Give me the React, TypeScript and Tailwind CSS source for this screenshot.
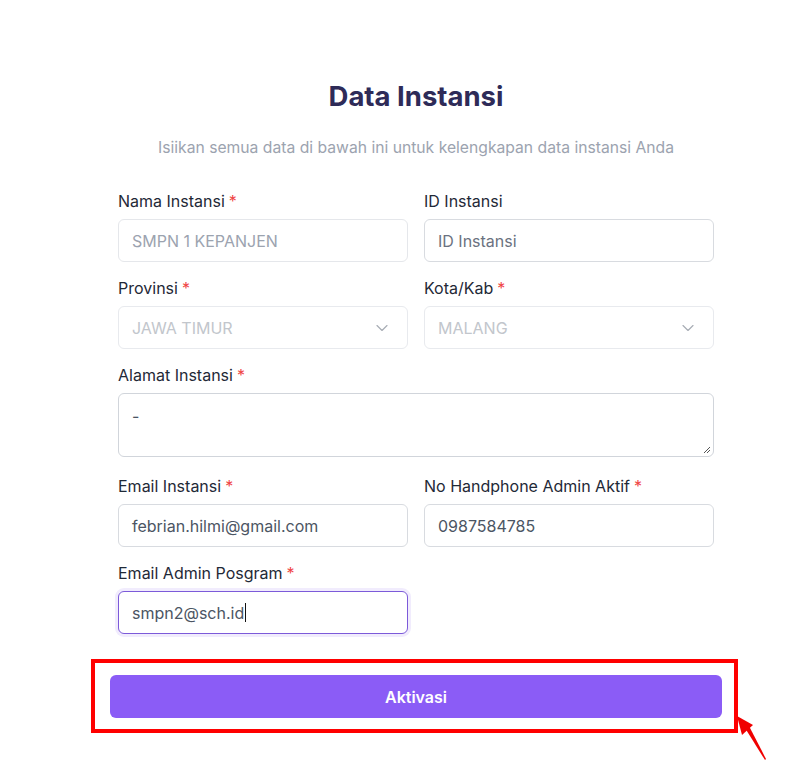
import { ChevronDown } from 'lucide-react';

type FieldProps = {
  label: string;
  required?: boolean;
  children: React.ReactNode;
};

function Field({ label, required, children }: FieldProps) {
  return (
    <div className="flex flex-col">
      <label className="mb-2 h-5 text-[16px] leading-5 text-[#1f2937]">
        {label}
        {required && <span className="ml-1 text-[#ef4444]">*</span>}
      </label>
      {children}
    </div>
  );
}

function TextBox({ value, tone = 'value', disabled }: { value: string; tone?: 'value' | 'muted'; disabled?: boolean }) {
  return (
    <div
      className={`flex h-[43px] items-center rounded-md border bg-white px-[13px] text-[16px] ${
        disabled ? 'border-[#e5e7eb] text-[#9ca3af]' : 'border-[#d8dbe0]'
      } ${!disabled && tone === 'muted' ? 'text-[#6b7280]' : ''} ${!disabled && tone === 'value' ? 'text-[#4b5563]' : ''}`}
    >
      {value}
    </div>
  );
}

function SelectBox({ value }: { value: string }) {
  return (
    <div className="flex h-[43px] items-center justify-between rounded-md border border-[#e8eaee] bg-white pl-[13px] pr-[15px] text-[16px] text-[#c2c6cc]">
      <span>{value}</span>
      <ChevronDown className="h-5 w-5 text-[#a8adb5]" strokeWidth={1.4} />
    </div>
  );
}

export default function App() {
  return (
    <div className="min-h-screen bg-white font-['Inter',sans-serif]">
      <div className="ml-[118px] w-[596px] pt-[80px]">
        <h1 className="text-center text-[27.5px] font-bold leading-8 text-[#2e2b58]">Data Instansi</h1>
        <p className="mt-[26px] text-center text-[15.7px] leading-5 text-[#9ca3af]">
          Isiikan semua data di bawah ini untuk kelengkapan data instansi Anda
        </p>

        <form className="mt-[33px] grid grid-cols-2 gap-x-4 gap-y-4">
          <Field label="Nama Instansi" required>
            <TextBox value="SMPN 1 KEPANJEN" disabled />
          </Field>
          <Field label="ID Instansi">
            <TextBox value="ID Instansi" tone="muted" />
          </Field>

          <Field label="Provinsi" required>
            <SelectBox value="JAWA TIMUR" />
          </Field>
          <Field label="Kota/Kab" required>
            <SelectBox value="MALANG" />
          </Field>

          <div className="col-span-2 pb-[3px]">
            <Field label="Alamat Instansi" required>
              <div className="relative h-[64px] rounded-md border border-[#d1d5db] bg-white px-[13px] pt-[10px] text-[16px] text-[#4b5563]">
                -
                <svg className="absolute bottom-[2px] right-[2px]" width="9" height="9" viewBox="0 0 9 9">
                  <path d="M8 2 L2 8 M8 5 L5 8" stroke="#555" strokeWidth="1" />
                </svg>
              </div>
            </Field>
          </div>

          <Field label="Email Instansi" required>
            <TextBox value="febrian.hilmi@gmail.com" />
          </Field>
          <Field label="No Handphone Admin Aktif" required>
            <TextBox value="0987584785" />
          </Field>

          <Field label="Email Admin Posgram" required>
            <div className="flex h-[43px] items-center rounded-md border border-[#7c5ad9] bg-white px-[13px] text-[16px] text-[#4b5563] shadow-[0_0_0_3px_#f1ecfd]">
              smpn2@sch.id
              <span className="ml-px inline-block h-[19px] w-px bg-[#111]" />
            </div>
          </Field>
        </form>
      </div>

      <div className="relative ml-[91px] mt-[25px] w-[647px] border-4 border-[#ff0000] pb-[11px] pl-[15px] pr-[12px] pt-[12px]">
        <button className="h-[43px] w-full rounded-md bg-[#8b5cf6] text-[16px] font-semibold text-white">Aktivasi</button>
        <svg className="absolute left-[640px] top-[48px]" width="40" height="56" viewBox="0 0 40 56">
          <polygon points="2,5 18,14 7,24" fill="#f00000" />
          <polygon points="10,17 14,15 31,48 30,49" fill="#f00000" />
        </svg>
      </div>
    </div>
  );
}
